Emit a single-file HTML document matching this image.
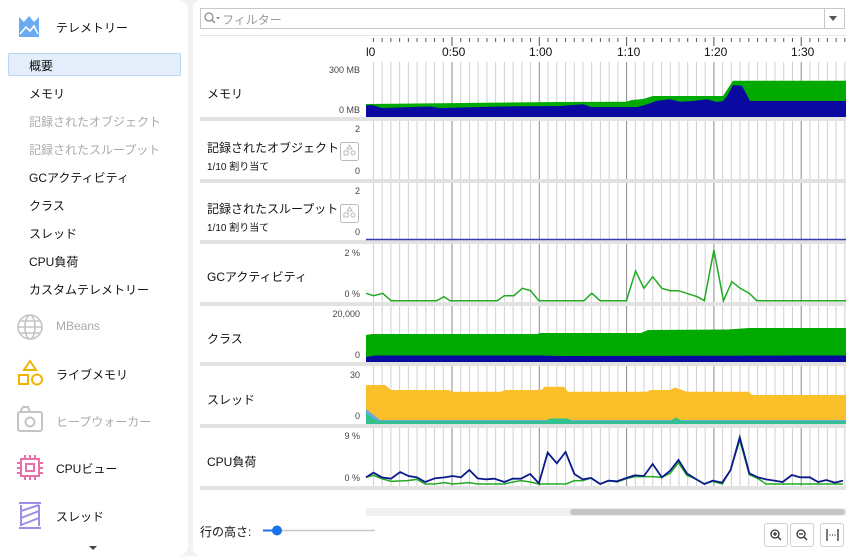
<!DOCTYPE html>
<html><head><meta charset="utf-8"><style>
*{margin:0;padding:0;box-sizing:border-box}
body{width:850px;height:556px;background:#f2f2f2;font-family:"Liberation Sans","Noto Sans CJK JP",sans-serif;position:relative;overflow:hidden;color:#111}
.side{position:absolute;left:0;top:0;width:188px;height:556px;background:#fff;border-radius:0 10px 10px 0}
.main{position:absolute;left:193px;top:0;width:657px;height:556px;background:#fff;border-radius:8px 0 0 8px}
.t{position:absolute;font-size:12px;white-space:nowrap}
.g{color:#aaa}
.sel{position:absolute;left:8px;top:53px;width:173px;height:23px;background:#e4eefb;border:1px solid #bcd5f3;border-radius:2px}
.ax{position:absolute;font-size:9px;color:#444;text-align:right;width:60px;left:300px}
.btn{position:absolute;top:523px;width:24px;height:24px;border:1px solid #cfcfcf;border-radius:3px;background:#fff}
</style></head><body>
<div class="side"></div>
<div class="main"></div>
<div class="sel"></div>
<svg width="850" height="556" style="position:absolute;left:0;top:0">
 <!-- sidebar icons -->
 <path d="M19 17 L19 37 L39 37 L39 17 L34 22 L29 16 L24 22 Z" fill="#6aaaf0"/>
 <path d="M20 34 L26 27 L30 31 L34 26 L38 34" fill="none" stroke="#fff" stroke-width="1.6"/>
 <g fill="none" stroke="#c4c4c4" stroke-width="1.6"><circle cx="30" cy="327" r="12"/><ellipse cx="30" cy="327" rx="5" ry="12"/><line x1="18" y1="327" x2="42" y2="327"/><line x1="20" y1="321" x2="40" y2="321"/><line x1="20" y1="333" x2="40" y2="333"/></g>
 <g fill="none" stroke="#f0b400" stroke-width="2"><path d="M30 361 L24 370 L36 370 Z"/><rect x="19" y="375" width="9" height="9"/><circle cx="37" cy="379.5" r="5"/></g>
 <g fill="none" stroke="#c4c4c4" stroke-width="2"><rect x="18" y="412" width="24" height="19" rx="2"/><path d="M20 412 L23 407 L28 407 L30 412"/><circle cx="30" cy="422" r="4.5"/></g>
 <g fill="none" stroke="#e870a8" stroke-width="2"><rect x="21" y="459" width="18" height="17"/><rect x="26" y="464" width="8" height="7"/><path d="M25 455v4M30 455v4M35 455v4M25 476v4M30 476v4M35 476v4M17 463h4M17 468h4M17 473h4M39 463h4M39 468h4M39 473h4"/></g>
 <g fill="none" stroke="#9b8ee6" stroke-width="2"><path d="M19 503 H41 M19 528 H41 M21 505 V526 M39 505 V526 M21 511 L39 505 M21 518 L39 511 M21 525 L39 518"/></g>
 <path d="M89 546 L97 546 L93 550 Z" fill="#444"/>
 <!-- filter box -->
 <rect x="200.5" y="8.5" width="644" height="20" fill="#fff" stroke="#c8c8c8"/>
 <line x1="824.5" y1="9" x2="824.5" y2="28" stroke="#c8c8c8"/>
 <path d="M829 16 L837 16 L833 21Z" fill="#555"/>
 <circle cx="209" cy="17" r="4" fill="none" stroke="#888" stroke-width="1.2"/><line x1="212" y1="20" x2="215" y2="23" stroke="#888" stroke-width="1.3"/>
 <path d="M216 17 L220 17 L218 19.5Z" fill="#888"/>
 <!-- separators -->
 <g fill="#e2e2e2"><rect x="200" y="117" width="646" height="4"/><rect x="200" y="179" width="646" height="4"/><rect x="200" y="240" width="646" height="4"/><rect x="200" y="302" width="646" height="4"/><rect x="200" y="362" width="646" height="4"/><rect x="200" y="424" width="646" height="4"/><rect x="200" y="486" width="646" height="4"/></g>
 <line x1="200" y1="35.5" x2="846" y2="35.5" stroke="#e6e6e6"/>
 <g id="grid"></g>
 <!-- memory -->
 <path d="M366 117 L366 104 L560 102 L626 101.7 L632 100 L643 99 L653 96 L723 96 L733 80.7 L846 80.7 L846 117Z" fill="#00aa00"/>
 <path d="M366 117 L366 105.5 L372 105 L382 108 L430 106.5 L440 108 L500 106.5 L560 106 L583 104.3 L591 107 L623 107 L637 107 L645 105 L657 100.7 L670 99.3 L680 101.7 L693 101 L707 99.3 L717 102 L723 101 L727 96 L733 85 L742 85.7 L750 101 L846 101 L846 117Z" fill="#0a0aa0"/>
 <line x1="366" y1="239.5" x2="846" y2="239.5" stroke="#3a3ab0" stroke-width="1.5"/>
 <!-- classes -->
 <path d="M366 362 L366 335 L372 334 L538 334 L540 333 L641 333 L648 330 L728 329.5 L749 328 L846 328 L846 362Z" fill="#00aa00"/>
 <path d="M366 362 L366 357 L375 355.5 L540 355.5 L560 356 L800 355.5 L846 355.5 L846 362Z" fill="#0a0aa0"/>
 <!-- threads -->
 <path d="M366 424 L366 385 L385 385 L391 390 L449 390 L452 391.7 L501 391.7 L505 390 L541 390 L545 386.7 L564 386.7 L568 391.7 L647 391.7 L650 390 L670 390 L675 387.5 L687 391.7 L749 391.7 L752 395 L846 395 L846 424Z" fill="#fbbf2a"/>
 <path d="M366 424 L366 409 L380 420 L846 420 L846 424Z" fill="#6aa8e8"/>
 <path d="M366 424 L366 413 L378 421 L545 421 L550 418.5 L568 418.5 L572 421 L670 421 L676 417.5 L682 421 L846 421 L846 424Z" fill="#35c090"/>
 <!-- GC -->
 <polyline fill="none" stroke="#22aa22" stroke-width="1.5" points="366,293.3 373.5,295.7 382.7,293.3 391,300.7 436.8,300.7 443.9,296.7 450.2,300.7 497.3,300.7 504.3,295.7 513.9,295.7 522.3,288.3 530.6,290.7 538.9,300.7 583.9,300.7 591.8,293.3 600.2,300.7 626.4,300.7 635.6,271 643.9,288.3 652.7,276.7 661.8,288.3 670.2,290.7 678.5,290.7 697.3,296.7 704.3,300.7 713.9,250 723.5,300.7 731.8,281.7 740.2,288.3 749.3,293.3 756.8,300.7 846,300.7"/>
 <!-- CPU -->
 <g transform="translate(195.17,420) scale(0.41667,0.33333)">
  <polyline vector-effect="non-scaling-stroke" fill="none" stroke="#22aa22" stroke-width="1.5" points="410,172 428,166 448,176 470,184 510,182 532,178 552,192 575,192 598,188 618,192 658,188 678,192 742,192 762,186 782,182 804,186 825,192 890,192 910,182 930,182 950,174 972,192 992,182 1012,186 1035,176 1055,170 1077,170 1098,170 1120,172 1140,160 1160,128 1180,166 1200,176 1222,192 1242,184 1265,192 1285,150 1307,60 1330,164 1350,175 1370,192 1555,192"/>
  <polyline vector-effect="non-scaling-stroke" fill="none" stroke="#0a1a8a" stroke-width="1.8" points="410,172 428,158 448,172 470,176 492,156 512,168 532,172 552,186 575,175 598,172 618,168 638,172 658,150 678,175 698,178 718,176 742,186 762,176 782,176 804,162 825,190 846,98 868,130 889,96 910,162 930,178 950,174 972,192 992,182 1012,184 1035,174 1055,166 1077,168 1098,132 1120,172 1140,152 1160,120 1180,160 1200,176 1222,192 1242,182 1265,188 1285,150 1307,52 1330,160 1350,172 1370,178 1390,182 1410,186 1432,165 1452,172 1475,172 1495,186 1515,180 1535,188 1555,182"/>
 </g>
 <!-- small icons -->
 <g fill="none" stroke="#bbb" stroke-width="1"><rect x="340.5" y="142.5" width="18" height="18" rx="2"/><rect x="340.5" y="204.5" width="18" height="18" rx="2"/>
 <path d="M349.5 145 L347 149 L352 149Z M344 151h4v4h-4z"/><circle cx="353" cy="153" r="2"/>
 <path d="M349.5 207 L347 211 L352 211Z M344 213h4v4h-4z"/><circle cx="353" cy="215" r="2"/></g>
 <!-- scrollbar -->
 <rect x="366" y="508" width="480" height="8" fill="#f0f0f0"/>
 <rect x="570" y="509" width="275" height="6" rx="3" fill="#c6c6c6"/>
 <!-- slider -->
 <line x1="263" y1="530.5" x2="375" y2="530.5" stroke="#c8c8c8" stroke-width="1.5"/>
 <line x1="263" y1="530.5" x2="277" y2="530.5" stroke="#1a73e8" stroke-width="2"/>
 <circle cx="277" cy="530.5" r="5" fill="#1a73e8"/>
</svg>
<div class="btn" style="left:764px"></div><div class="btn" style="left:790px"></div><div class="btn" style="left:820px"></div>
<svg width="850" height="556" style="position:absolute;left:0;top:0">
 <g fill="none" stroke="#333" stroke-width="1.3">
  <circle cx="775" cy="534" r="4"/><line x1="778" y1="537" x2="781" y2="540"/><path d="M773 534h4M775 532v4"/>
  <circle cx="801" cy="534" r="4"/><line x1="804" y1="537" x2="807" y2="540"/><path d="M799 534h4"/>
  <path d="M827 529v12M838 529v12"/><path d="M829.5 535h1M832 535h1M834.5 535h1"/>
 </g>
</svg>
<script>
var g=document.getElementById('grid'),s='';
for(var i=-10;i<60;i++){var x=452+i*8.73;if(x<367||x>846)continue;var maj=(i%10===0);
 s+='<line x1="'+x+'" y1="'+(maj?37:38)+'" x2="'+x+'" y2="'+(maj?46:42)+'" stroke="#555" stroke-width="1"/>';
 var ys=[[62,117],[121,179],[183,240],[244,302],[306,362],[366,424],[428,486]];
 for(var k=0;k<ys.length;k++)s+='<line x1="'+x+'" y1="'+ys[k][0]+'" x2="'+x+'" y2="'+ys[k][1]+'" stroke="'+(maj?'#8a8a8a':'#cfcfcf')+'" stroke-width="1"/>';}
g.innerHTML=s;
</script>
<div class="t" style="left:56px;top:19px">テレメトリー</div>
<div class="t" style="left:29px;top:57px">概要</div>
<div class="t" style="left:29px;top:85px">メモリ</div>
<div class="t g" style="left:29px;top:113px">記録されたオブジェクト</div>
<div class="t g" style="left:29px;top:141px">記録されたスループット</div>
<div class="t" style="left:29px;top:169px">GCアクティビティ</div>
<div class="t" style="left:29px;top:197px">クラス</div>
<div class="t" style="left:29px;top:225px">スレッド</div>
<div class="t" style="left:29px;top:253px">CPU負荷</div>
<div class="t" style="left:29px;top:281px">カスタムテレメトリー</div>
<div class="t g" style="left:56px;top:319px">MBeans</div>
<div class="t" style="left:56px;top:366px">ライブメモリ</div>
<div class="t g" style="left:56px;top:413px">ヒープウォーカー</div>
<div class="t" style="left:56px;top:460px">CPUビュー</div>
<div class="t" style="left:56px;top:508px">スレッド</div>
<div class="t" style="left:222px;top:11px;color:#999">フィルター</div>
<div class="t" style="left:366px;top:45px">l0</div>
<div class="t" style="left:442px;top:45px">0:50</div>
<div class="t" style="left:529px;top:45px">1:00</div>
<div class="t" style="left:617px;top:45px">1:10</div>
<div class="t" style="left:704px;top:45px">1:20</div>
<div class="t" style="left:791px;top:45px">1:30</div>
<div class="t" style="left:207px;top:85px">メモリ</div>
<div class="t" style="left:207px;top:139px">記録されたオブジェクト</div>
<div class="t" style="left:207px;top:200px">記録されたスループット</div>
<div class="t" style="left:207px;top:158px;font-size:10px">1/10 割り当て</div>
<div class="t" style="left:207px;top:219px;font-size:10px">1/10 割り当て</div>
<div class="t" style="left:207px;top:268px">GCアクティビティ</div>
<div class="t" style="left:207px;top:330px">クラス</div>
<div class="t" style="left:207px;top:391px">スレッド</div>
<div class="t" style="left:207px;top:453px">CPU負荷</div>
<div class="ax" style="top:65px">300 MB</div><div class="ax" style="top:105px">0 MB</div>
<div class="ax" style="top:124px">2</div><div class="ax" style="top:166px">0</div>
<div class="ax" style="top:186px">2</div><div class="ax" style="top:227px">0</div>
<div class="ax" style="top:248px">2 %</div><div class="ax" style="top:289px">0 %</div>
<div class="ax" style="top:309px">20,000</div><div class="ax" style="top:350px">0</div>
<div class="ax" style="top:370px">30</div><div class="ax" style="top:411px">0</div>
<div class="ax" style="top:431px">9 %</div><div class="ax" style="top:473px">0 %</div>
<div class="t" style="left:200px;top:523px">行の高さ:</div>
</body></html>
